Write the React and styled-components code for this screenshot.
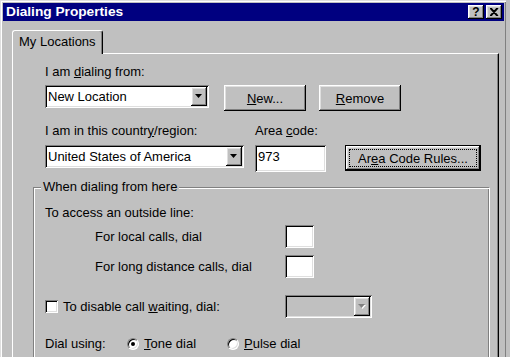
import React from 'react'
import styled, { createGlobalStyle, css } from 'styled-components'

const GlobalStyle = createGlobalStyle`
  html, body {
    margin: 0;
    padding: 0;
    background: #c0c0c0;
    overflow: hidden;
  }
  body {
    font-family: "Liberation Sans", Arial, sans-serif;
    font-size: 13px;
    color: #000;
  }
  #root {
    width: 510px;
    height: 357px;
    overflow: hidden;
  }
`

const raised = css`
  background: #c0c0c0;
  box-shadow: inset -1px -1px #000, inset 1px 1px #fff, inset -2px -2px #808080, inset 2px 2px #dfdfdf;
`
const sunken = css`
  box-shadow: inset 1px 1px #808080, inset -1px -1px #fff, inset 2px 2px #000, inset -2px -2px #dfdfdf;
`

const Window = styled.div`
  width: 506px;
  height: 420px;
  box-sizing: border-box;
  padding: 3px 2px 0 3px;
  background: #c0c0c0;
  box-shadow: inset 1px 1px #dfdfdf, inset 2px 2px #fff, inset -1px 0 #808080;
`
const TitleBar = styled.div`
  height: 18px;
  display: flex;
  align-items: center;
  padding: 0 2px 0 3px;
  background: #000080;
`
const Title = styled.div`
  color: #fff;
  font-weight: bold;
  font-size: 13.7px;
  line-height: 18px;
`
const TitleButtons = styled.div`
  margin-left: auto;
  display: flex;
  gap: 2px;
`
const TitleButton = styled.div`
  ${raised};
  width: 16px;
  height: 14px;
  display: flex;
  align-items: center;
  justify-content: center;
  font-weight: bold;
  font-size: 12px;
  line-height: 14px;
`
const Body = styled.div`
  padding: 9px 0 0 9px;
`
const TabRow = styled.div`
  display: flex;
`
const Tab = styled.div`
  position: relative;
  z-index: 1;
  margin-bottom: -1px;
  padding: 3px 6px 4px 6px;
  line-height: 16px;
  background: #c0c0c0;
  border-top: 1px solid #fff;
  border-left: 1px solid #fff;
  border-right: 1px solid #000;
  border-radius: 3px 3px 0 0;
  box-shadow: inset -1px 0 #808080;
`
const Panel = styled.div`
  width: 487px;
  height: 360px;
  box-sizing: border-box;
  padding: 10px 0 0 20px;
  border-top: 1px solid #fff;
  border-left: 1px solid #fff;
  border-right: 1px solid #000;
  box-shadow: inset -1px 0 #808080;
`
const TopSection = styled.div`
  padding-left: 12px;
`
const Label = styled.div`
  line-height: 16px;
  white-space: nowrap;
  padding-left: ${({ $indent }) => $indent || 0}px;
`
const Row = styled.div`
  display: flex;
  align-items: flex-start;
  margin-top: ${({ $top }) => $top || 0}px;
`
const Combo = styled.div`
  ${sunken};
  width: ${({ $w }) => $w}px;
  height: 23px;
  box-sizing: border-box;
  display: flex;
  align-items: stretch;
  padding: 2px 2px 2px 3px;
  background: ${({ $disabled }) => ($disabled ? '#c0c0c0' : '#fff')};
`
const ComboText = styled.div`
  flex: 1;
  line-height: 19px;
  white-space: nowrap;
`
const ArrowButton = styled.div`
  ${raised};
  width: 16px;
  display: flex;
  align-items: center;
  justify-content: center;
`
const Field = styled.div`
  ${sunken};
  width: ${({ $w }) => $w}px;
  height: ${({ $h }) => $h || 23}px;
  box-sizing: border-box;
  padding: 2px 3px;
  line-height: 20px;
  background: #fff;
`
const Button = styled.div`
  ${raised};
  width: ${({ $w }) => $w}px;
  height: 26px;
  box-sizing: border-box;
  display: flex;
  align-items: center;
  justify-content: center;
  margin-left: ${({ $left }) => $left || 0}px;
  ${({ $default }) =>
    $default &&
    css`
      border: 1px solid #000;
      padding: 3px;
    `}
`
const FocusRect = styled.div`
  flex: 1;
  align-self: stretch;
  display: flex;
  align-items: center;
  justify-content: center;
  border: 1px dotted #000;
`
const CountryGrid = styled.div`
  display: grid;
  grid-template-columns: 210px 90px auto;
  row-gap: 6px;
  margin-top: 12px;
  align-items: start;
`
const GroupBox = styled.div`
  width: 457px;
  height: 220px;
  box-sizing: border-box;
  margin-top: 15px;
  display: flex;
  flex-direction: column;
  align-items: flex-start;
  padding-left: 11px;
  border-top: 1px solid #808080;
  border-left: 1px solid #808080;
  border-right: 1px solid #fff;
  box-shadow: inset 1px 1px #fff, inset -1px 0 #808080;
`
const Legend = styled.div`
  margin: -9px 0 0 -4px;
  padding: 0 2px;
  line-height: 16px;
  background: #c0c0c0;
`
const Line = styled.div`
  line-height: 16px;
  margin-top: ${({ $top }) => $top || 0}px;
`
const FormGrid = styled.div`
  display: grid;
  grid-template-columns: 240px auto;
  row-gap: 7px;
  align-items: center;
  margin-top: ${({ $top }) => $top || 0}px;
`
const CheckLabel = styled.div`
  display: flex;
  align-items: center;
  gap: 5px;
  line-height: 16px;
`
const CheckBox = styled.div`
  ${sunken};
  width: 13px;
  height: 13px;
  background: #fff;
`
const DialRow = styled.div`
  display: flex;
  align-items: center;
  line-height: 16px;
  margin-top: 18px;
`
const DialLabel = styled.div`
  width: 82px;
`
const RadioOption = styled.div`
  width: 100px;
  display: flex;
  align-items: center;
  gap: 5px;
`
const Radio = styled.div`
  width: 12px;
  height: 12px;
  box-sizing: border-box;
  border-radius: 50%;
  background: #fff;
  border: 1px solid;
  border-color: #808080 #fff #fff #808080;
  box-shadow: inset 1px 1px #000, inset -1px -1px #dfdfdf;
  display: flex;
  align-items: center;
  justify-content: center;
  &::after {
    content: '';
    width: 4px;
    height: 4px;
    border-radius: 50%;
    background: ${({ $checked }) => ($checked ? '#000' : 'transparent')};
  }
`

const DownArrow = ({ disabled }) => (
  <svg width="8" height="5" viewBox="0 0 8 5">
    {disabled && <polygon points="1,1 8,1 4.5,5" fill="#fff" />}
    <polygon points="0,0 7,0 3.5,4" fill={disabled ? '#808080' : '#000'} />
  </svg>
)

const CloseGlyph = () => (
  <svg width="9" height="8" viewBox="0 0 9 8">
    <path d="M1 0 L8 8 M8 0 L1 8 M0 0 L7 8 M7 0 L0 8" stroke="#000" strokeWidth="1.2" />
  </svg>
)

const App = () => (
  <>
    <GlobalStyle />
    <Window>
      <TitleBar>
        <Title>Dialing Properties</Title>
        <TitleButtons>
          <TitleButton>?</TitleButton>
          <TitleButton>
            <CloseGlyph />
          </TitleButton>
        </TitleButtons>
      </TitleBar>
      <Body>
        <TabRow>
          <Tab>My Locations</Tab>
        </TabRow>
        <Panel>
          <TopSection>
            <Label>
              I am <u>d</u>ialing from:
            </Label>
            <Row $top={5}>
              <Combo $w={164}>
                <ComboText>New Location</ComboText>
                <ArrowButton>
                  <DownArrow />
                </ArrowButton>
              </Combo>
              <Button $w={82} $left={15}>
                <span>
                  <u>N</u>ew...
                </span>
              </Button>
              <Button $w={82} $left={13}>
                <span>
                  <u>R</u>emove
                </span>
              </Button>
            </Row>
            <CountryGrid>
              <Label>
                I am in this countr<u>y</u>/region:
              </Label>
              <Label>
                Area <u>c</u>ode:
              </Label>
              <div />
              <Combo $w={199}>
                <ComboText>United States of America</ComboText>
                <ArrowButton>
                  <DownArrow />
                </ArrowButton>
              </Combo>
              <Field $w={71} $h={27}>
                973
              </Field>
              <Button $w={136} $default>
                <FocusRect>
                  <span>
                    Ar<u>e</u>a Code Rules...
                  </span>
                </FocusRect>
              </Button>
            </CountryGrid>
          </TopSection>
          <GroupBox>
            <Legend>When dialing from here</Legend>
            <Line $top={10}>To access an outside line:</Line>
            <FormGrid $top={4}>
              <Label $indent={50}>For local calls, dial</Label>
              <Field $w={29} />
              <Label $indent={50}>For long distance calls, dial</Label>
              <Field $w={29} />
            </FormGrid>
            <FormGrid $top={17}>
              <CheckLabel>
                <CheckBox />
                <span>
                  To disable call <u>w</u>aiting, dial:
                </span>
              </CheckLabel>
              <Combo $w={87} $disabled>
                <ComboText />
                <ArrowButton>
                  <DownArrow disabled />
                </ArrowButton>
              </Combo>
            </FormGrid>
            <DialRow>
              <DialLabel>Dial using:</DialLabel>
              <RadioOption>
                <Radio $checked />
                <span>
                  <u>T</u>one dial
                </span>
              </RadioOption>
              <RadioOption>
                <Radio />
                <span>
                  <u>P</u>ulse dial
                </span>
              </RadioOption>
            </DialRow>
          </GroupBox>
        </Panel>
      </Body>
    </Window>
  </>
)

export default App
